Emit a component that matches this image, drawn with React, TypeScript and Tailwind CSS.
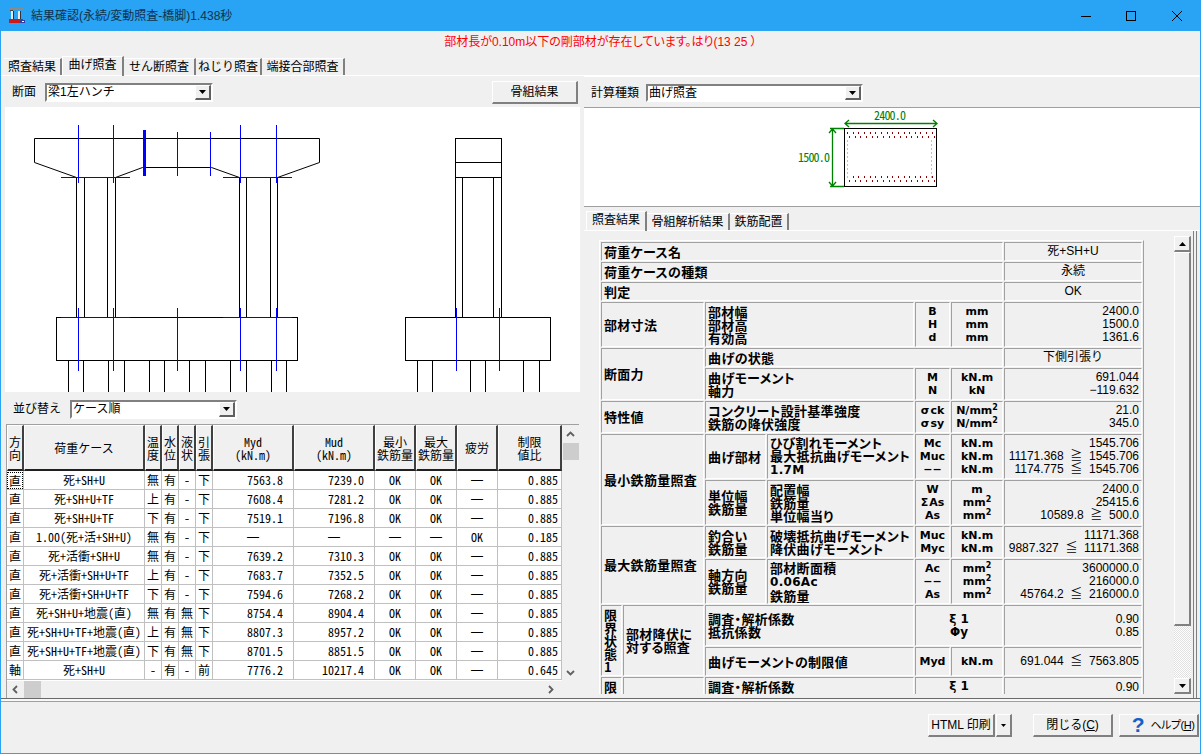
import type { ReactNode } from 'react';

const gridRows = [
  ['直', '死+SH+U', '無', '有', '－', '下', '7563.8', '7239.0', 'OK', 'OK', '―', '0.885'],
  ['直', '死+SH+U+TF', '上', '有', '－', '下', '7608.4', '7281.2', 'OK', 'OK', '―', '0.885'],
  ['直', '死+SH+U+TF', '下', '有', '－', '下', '7519.1', '7196.8', 'OK', 'OK', '―', '0.885'],
  ['直', '1.00(死+活+SH+U)', '無', '有', '－', '下', '―', '―', '―', '―', 'OK', '0.185'],
  ['直', '死+活衝+SH+U', '無', '有', '－', '下', '7639.2', '7310.3', 'OK', 'OK', '―', '0.885'],
  ['直', '死+活衝+SH+U+TF', '上', '有', '－', '下', '7683.7', '7352.5', 'OK', 'OK', '―', '0.885'],
  ['直', '死+活衝+SH+U+TF', '下', '有', '－', '下', '7594.6', '7268.2', 'OK', 'OK', '―', '0.885'],
  ['直', '死+SH+U+地震(直)', '無', '有', '無', '下', '8754.4', '8904.4', 'OK', 'OK', '―', '0.885'],
  ['直', '死+SH+U+TF+地震(直)', '上', '有', '無', '下', '8807.3', '8957.2', 'OK', 'OK', '―', '0.885'],
  ['直', '死+SH+U+TF+地震(直)', '下', '有', '無', '下', '8701.5', '8851.5', 'OK', 'OK', '―', '0.885'],
  ['軸', '死+SH+U', '－', '有', '－', '前', '7776.2', '10217.4', 'OK', 'OK', '―', '0.645'],
];

const pilesFront = [68.5, 83.5, 108.5, 124.5, 149.5, 164.5, 189.5, 205.5, 230.5, 246.5, 271.5, 286.5];
const pilesSide = [417.5, 432.5, 470.5, 485.5, 523.5, 539.5];

function Tab({ active, width, children }: { active?: boolean; width: string; children: ReactNode }) {
  return (
    <div
      className={
        width +
        (active
          ? ' z-10 -mb-px flex h-[20px] items-center justify-center border-t border-l border-white border-r-2 border-r-[#808080] pb-[3px]'
          : ' flex h-[17px] items-center justify-center border-t border-white border-r-2 border-r-[#808080]')
      }
    >
      {children}
    </div>
  );
}

function Combo({ width, height, children }: { width: string; height: string; children: ReactNode }) {
  return (
    <div
      className={
        width +
        ' ' +
        height +
        ' flex items-stretch border-2 border-t-[#808080] border-l-[#808080] border-r-white border-b-white bg-white'
      }
    >
      <div className="flex-1 self-center overflow-hidden pl-[1px] text-[12px] leading-[14px] whitespace-nowrap">{children}</div>
      <div className="flex w-[16px] items-center justify-center border-t border-l border-white border-r-2 border-b-2 border-r-[#606060] border-b-[#606060] bg-[#f0f0f0]">
        <svg width="7" height="4" viewBox="0 0 7 4">
          <path d="M0 0H7L3.5 4Z" fill="#000" />
        </svg>
      </div>
    </div>
  );
}

function Btn({ width, children }: { width: string; children: ReactNode }) {
  return (
    <div
      className={
        width +
        ' flex h-[23px] items-center justify-center border-t border-l border-white border-r-2 border-b-2 border-r-[#808080] border-b-[#808080] bg-[#f0f0f0]'
      }
    >
      {children}
    </div>
  );
}

function Chev({ d }: { d: string }) {
  return (
    <svg width="9" height="9" viewBox="0 0 9 9">
      <path d={d} fill="none" stroke="#606060" strokeWidth="1.8" />
    </svg>
  );
}

function PierDrawing() {
  return (
    <svg width="575" height="285" viewBox="5 107 575 285" className="block bg-white">
      <g fill="none" stroke="#000" strokeWidth="1">
        <path d="M34.5 138.5H319.5V162.5L277.5 177.5H239.5L211.5 167.5H142.5L115.5 177.5H76.5L34.5 162.5Z" />
        <path shapeRendering="crispEdges" d="M76.5 177V317M84.5 177V317M107.5 177V317M115.5 177V317M239.5 177V317M246.5 177V317M270.5 177V317M277.5 177V317" />
        <rect x="56.5" y="317.5" width="241" height="43" shapeRendering="crispEdges" />
        <path shapeRendering="crispEdges" d="M455.5 138.5H501.5V177.5H455.5ZM455.5 162.5H501.5M455.5 177V317M462.5 177V317M493.5 177V317M501.5 177V317" />
        <rect x="405.5" y="317.5" width="145" height="43" shapeRendering="crispEdges" />
        {pilesFront.concat(pilesSide).map((x) => (
          <path key={x} shapeRendering="crispEdges" d={`M${x} 361V392`} />
        ))}
      </g>
      <g fill="none" stroke="#0000ff" strokeWidth="1" shapeRendering="crispEdges">
        <path d="M61 177.5H130M223 177.5H292M61 317.5H130M223 317.5H292" />
        <path d="M78.5 125V183M113.5 125V183M240.5 125V183M276.5 125V183" />
        <path d="M78.5 308V371M113.5 308V371M240.5 308V371M276.5 308V371M177.5 308V371" />
        <path d="M177.5 132V176M210.5 132V176M456.5 308V371M499.5 308V371" />
        <path d="M144.5 130V176" strokeWidth="3" />
      </g>
    </svg>
  );
}

function SectionDrawing() {
  const xs = Array.from({ length: 16 }, (_, i) => 847 + i * 5.65);
  const sides = Array.from({ length: 10 }, (_, i) => 140 + i * 4);
  return (
    <svg width="616" height="98" viewBox="584 108 616 98" className="block">
      <rect x="844.5" y="128.5" width="92" height="58" fill="#fff" stroke="#000" shapeRendering="crispEdges" />
      <g fill="#8b0000" shapeRendering="crispEdges">
        {xs.map((x) => (
          <g key={x}>
            <rect x={Math.round(x)} y="132" width="1" height="2" />
            <rect x={Math.round(x) + 2} y="136" width="1" height="2" />
            <rect x={Math.round(x)} y="176" width="1" height="2" />
            <rect x={Math.round(x) + 2} y="180" width="1" height="2" />
          </g>
        ))}
      </g>
      <g fill="#c0c0c0" shapeRendering="crispEdges">
        {sides.map((y) => (
          <g key={y}>
            <rect x="847" y={y} width="1" height="2" />
            <rect x="931" y={y} width="1" height="2" />
          </g>
        ))}
      </g>
      <g fill="none" stroke="#008000" strokeWidth="1.3">
        <path d="M845 123.5H937M849 120L845 123.5L849 127M933 120L937 123.5L933 127" />
        <path d="M832.5 129V186M829 133L832.5 129L836 133M829 182L832.5 186L836 182M830 128.5H844M830 186.5H844" />
      </g>
    </svg>
  );
}

function Td({
  children,
  right,
  center,
  colSpan,
  rowSpan,
  bold = true,
}: {
  children: ReactNode;
  right?: boolean;
  center?: boolean;
  colSpan?: number;
  rowSpan?: number;
  bold?: boolean;
}) {
  return (
    <td
      colSpan={colSpan}
      rowSpan={rowSpan}
      className={
        'overflow-hidden border border-t-[#a0a0a0] border-r-white border-b-white border-l-[#a0a0a0] px-[2px] py-0 leading-[13px] whitespace-nowrap ' +
        (right ? 'text-right ' : center ? 'text-center ' : 'text-left ') +
        (bold
          ? "pb-[1px] font-['Noto_Sans_CJK_JP',sans-serif] text-[13px] font-bold tracking-[0.3px] [font-feature-settings:'palt']"
          : "font-['Liberation_Sans','Noto_Sans_CJK_JP',sans-serif] text-[12px] font-normal")
      }
    >
      {children}
    </td>
  );
}

function Sym({ children }: { children: ReactNode }) {
  return (
    <td className="border border-t-[#a0a0a0] border-r-white border-b-white border-l-[#a0a0a0] p-0 text-center font-['DejaVu_Sans','Noto_Sans_CJK_JP',sans-serif] text-[11px] leading-[13px] font-bold whitespace-nowrap">
      {children}
    </td>
  );
}

function Sq() {
  return <sup className="text-[8px] leading-none">2</sup>;
}

function ResultTable() {
  return (
    <table className="w-[545px] table-fixed border-separate border-spacing-px border border-t-white border-r-[#a0a0a0] border-b-[#a0a0a0] border-l-white">
      <colgroup>
        <col className="w-[21px]" />
        <col className="w-[81px]" />
        <col className="w-[61px]" />
        <col className="w-[147px]" />
        <col className="w-[35px]" />
        <col className="w-[52px]" />
        <col className="w-[138px]" />
      </colgroup>
      <tbody>
        <tr className="h-[19px]">
          <Td colSpan={6}>荷重ケース名</Td>
          <Td center bold={false}>死+SH+U</Td>
        </tr>
        <tr className="h-[19px]">
          <Td colSpan={6}>荷重ケースの種類</Td>
          <Td center bold={false}>永続</Td>
        </tr>
        <tr className="h-[19px]">
          <Td colSpan={6}>判定</Td>
          <Td center bold={false}>OK</Td>
        </tr>
        <tr className="h-[45px]">
          <Td colSpan={2}>部材寸法</Td>
          <Td colSpan={2}>部材幅<br />部材高<br />有効高</Td>
          <Sym>B<br />H<br />d</Sym>
          <Sym>mm<br />mm<br />mm</Sym>
          <Td right bold={false}>2400.0<br />1500.0<br />1361.6</Td>
        </tr>
        <tr className="h-[19px]">
          <Td colSpan={2} rowSpan={2}>断面力</Td>
          <Td colSpan={4}>曲げの状態</Td>
          <Td center bold={false}>下側引張り</Td>
        </tr>
        <tr className="h-[32px]">
          <Td colSpan={2}>曲げモーメント<br />軸力</Td>
          <Sym>M<br />N</Sym>
          <Sym>kN.m<br />kN</Sym>
          <Td right bold={false}>691.044<br />−119.632</Td>
        </tr>
        <tr className="h-[32px]">
          <Td colSpan={2}>特性値</Td>
          <Td colSpan={2}>コンクリート設計基準強度<br />鉄筋の降伏強度</Td>
          <Sym>σ&#8202;ck<br />σ&#8202;sy</Sym>
          <Sym>N/mm<Sq /><br />N/mm<Sq /></Sym>
          <Td right bold={false}>21.0<br />345.0</Td>
        </tr>
        <tr className="h-[45px]">
          <Td colSpan={2} rowSpan={2}>最小鉄筋量照査</Td>
          <Td>曲げ部材</Td>
          <Td>ひび割れモーメント<br />最大抵抗曲げモーメント<br /><span className="font-['DejaVu_Sans'] text-[12px]">1.7M</span></Td>
          <Sym>Mc<br />Muc<br />−−</Sym>
          <Sym>kN.m<br />kN.m<br />kN.m</Sym>
          <Td right bold={false}>1545.706<br />11171.368 &nbsp;≧&nbsp; 1545.706<br />1174.775 &nbsp;≦&nbsp; 1545.706</Td>
        </tr>
        <tr className="h-[45px]">
          <Td>単位幅<br />鉄筋量</Td>
          <Td>配置幅<br />鉄筋量<br />単位幅当り</Td>
          <Sym>W<br />Σ&#8202;As<br />As</Sym>
          <Sym>m<br />mm<Sq /><br />mm<Sq /></Sym>
          <Td right bold={false}>2400.0<br />25415.6<br />10589.8 &nbsp;≧&nbsp; 500.0</Td>
        </tr>
        <tr className="h-[32px]">
          <Td colSpan={2} rowSpan={2}>最大鉄筋量照査</Td>
          <Td>釣合い<br />鉄筋量</Td>
          <Td>破壊抵抗曲げモーメント<br />降伏曲げモーメント</Td>
          <Sym>Muc<br />Myc</Sym>
          <Sym>kN.m<br />kN.m</Sym>
          <Td right bold={false}>11171.368<br />9887.327 &nbsp;≦&nbsp; 11171.368</Td>
        </tr>
        <tr className="h-[45px]">
          <Td>軸方向<br />鉄筋量</Td>
          <Td>部材断面積<br /><span className="font-['DejaVu_Sans'] text-[12px]">0.06Ac</span><br />鉄筋量</Td>
          <Sym>Ac<br />−−<br />As</Sym>
          <Sym>mm<Sq /><br />mm<Sq /><br />mm<Sq /></Sym>
          <Td right bold={false}>3600000.0<br />216000.0<br />45764.2 &nbsp;≦&nbsp; 216000.0</Td>
        </tr>
        <tr className="h-[41px]">
          <Td rowSpan={2}>限<br />界<br />状<br />態<br />1</Td>
          <Td rowSpan={2}>部材降伏に<br />対する照査</Td>
          <Td colSpan={2}>調査・解析係数<br />抵抗係数</Td>
          <td colSpan={2} className="border border-t-[#a0a0a0] border-r-white border-b-white border-l-[#a0a0a0] p-0 text-center font-['DejaVu_Sans',sans-serif] text-[12px] leading-[13px] font-bold">ξ 1<br />Φy</td>
          <Td right bold={false}>0.90<br />0.85</Td>
        </tr>
        <tr className="h-[29px]">
          <Td colSpan={2}>曲げモーメントの制限値</Td>
          <Sym>Myd</Sym>
          <Sym>kN.m</Sym>
          <Td right bold={false}>691.044 &nbsp;≦&nbsp; 7563.805</Td>
        </tr>
        <tr className="h-[30px] align-top">
          <Td><div className="pt-[2px]">限</div></Td>
          <Td> </Td>
          <Td colSpan={2}><div className="pt-[2px]">調査・解析係数</div></Td>
          <td colSpan={2} className="border border-t-[#a0a0a0] border-r-white border-b-white border-l-[#a0a0a0] p-0 pt-[2px] text-center font-['DejaVu_Sans',sans-serif] text-[12px] leading-[13px] font-bold">ξ 1</td>
          <Td right bold={false}><div className="pt-[3px]">0.90</div></Td>
        </tr>
      </tbody>
    </table>
  );
}

function CaseGrid() {
  const head = 'border-t border-r-2 border-b-2 border-l border-t-white border-r-[#404040] border-b-[#202020] border-l-white bg-[#f0f0f0] p-0 text-center leading-[13px] font-normal';
  const cell = 'border-r border-b border-[#c0c0c0] p-0 text-center whitespace-nowrap';
  const dash = " font-['Liberation_Sans',sans-serif]";
  return (
    <div className="ml-[5px] flex h-[274px] w-[573px] flex-col border-t border-l border-[#a0a0a0]">
      <div className="flex h-[256px]">
        <div className="h-full w-[555px] overflow-hidden bg-white">
          <table className="w-[555px] table-fixed border-separate border-spacing-0 font-['Noto_Sans_CJK_JP',sans-serif] text-[12px] [font-feature-settings:'hwid']">
            <colgroup>
              <col className="w-[17px]" />
              <col className="w-[121px]" />
              <col className="w-[17px]" />
              <col className="w-[17px]" />
              <col className="w-[17px]" />
              <col className="w-[17px]" />
              <col className="w-[81px]" />
              <col className="w-[81px]" />
              <col className="w-[41px]" />
              <col className="w-[41px]" />
              <col className="w-[41px]" />
              <col className="w-[64px]" />
            </colgroup>
            <thead>
              <tr className="h-[46px]">
                <th className={head}>方<br />向</th>
                <th className={head}>荷重ケース</th>
                <th className={head}>温<br />度</th>
                <th className={head}>水<br />位</th>
                <th className={head}>液<br />状</th>
                <th className={head}>引<br />張</th>
                <th className={head}>Myd<br />(kN.m)</th>
                <th className={head}>Mud<br />(kN.m)</th>
                <th className={head}>最小<br />鉄筋量</th>
                <th className={head}>最大<br />鉄筋量</th>
                <th className={head}>疲労</th>
                <th className={head}>制限<br />値比</th>
              </tr>
            </thead>
            <tbody>
              {gridRows.map((r, i) => (
                <tr key={i} className="h-[19px]">
                  {r.map((v, j) => {
                    if (j === 0 && i === 0) {
                      return (
                        <td key={j} className={cell}>
                          <div className="mx-auto h-[17px] border border-dotted border-black leading-[15px]">{v}</div>
                        </td>
                      );
                    }
                    if ((j === 6 || j === 7) && v !== '―') {
                      return (
                        <td key={j} className={cell + ' !text-right pr-[10px]'}>
                          {v}
                        </td>
                      );
                    }
                    if (j === 11) {
                      return (
                        <td key={j} className={cell + ' !text-right pr-[3px]'}>
                          {v}
                        </td>
                      );
                    }
                    return (
                      <td key={j} className={cell + (v === '―' ? dash : '')}>
                        {v}
                      </td>
                    );
                  })}
                </tr>
              ))}
            </tbody>
          </table>
        </div>
        <div className="flex w-[17px] flex-col items-center bg-[#f0f0f0]">
          <div className="flex h-[18px] items-center justify-center">
            <Chev d="M1 6L4.5 2.5L8 6" />
          </div>
          <div className="h-[17px] w-[16px] bg-[#cdcdcd]" />
          <div className="flex-1" />
          <div className="flex h-[17px] items-center justify-center">
            <Chev d="M1 3L4.5 6.5L8 3" />
          </div>
        </div>
      </div>
      <div className="flex h-[17px] items-center bg-[#f0f0f0]">
        <div className="flex w-[17px] items-center justify-center">
          <Chev d="M6 1L2.5 4.5L6 8" />
        </div>
        <div className="h-[17px] w-[17px] bg-[#cdcdcd]" />
        <div className="flex-1" />
        <div className="mr-[20px] flex w-[17px] items-center justify-center">
          <Chev d="M3 1L6.5 4.5L3 8" />
        </div>
      </div>
    </div>
  );
}

function ScrollBtn({ d }: { d: string }) {
  return (
    <div className="flex h-[16px] items-center justify-center border-t border-r-2 border-b-2 border-l border-t-white border-r-[#808080] border-b-[#808080] border-l-white bg-[#f0f0f0]">
      <svg width="7" height="4" viewBox="0 0 7 4">
        <path d={d} fill="#000" />
      </svg>
    </div>
  );
}

export default function App() {
  return (
    <div className="flex h-[754px] w-[1201px] flex-col overflow-hidden border-x border-b border-[#29a3f3] bg-[#f0f0f0] font-['Liberation_Sans','Noto_Sans_CJK_JP',sans-serif] text-[12px] text-black">
      {/* Title bar */}
      <div className="-mx-px flex h-[31px] shrink-0 items-center bg-[#29a3f3] pl-[9px]">
        <svg width="16" height="16" viewBox="0 0 16 16">
          <rect x="0" y="0" width="15" height="2" fill="#8a8a8a" />
          <rect x="1" y="2" width="3" height="1" fill="#444" />
          <rect x="2" y="3" width="2" height="8" fill="#e8e8e8" />
          <rect x="4" y="3" width="1" height="8" fill="#333" />
          <rect x="9" y="3" width="2" height="8" fill="#e8e8e8" />
          <rect x="11" y="3" width="1" height="8" fill="#333" />
          <rect x="0" y="11" width="14" height="4" fill="#d01818" />
          <rect x="11" y="12" width="5" height="3" fill="#3040a0" />
          <rect x="13" y="13" width="2" height="1" fill="#fff" />
        </svg>
        <span className="ml-[6px] text-[#10324f]">結果確認(永続/変動照査-橋脚)1.438秒</span>
        <div className="ml-auto flex h-full items-center">
          <div className="flex h-full w-[45px] items-center justify-center">
            <svg width="10" height="10" viewBox="0 0 10 10"><path d="M0 5.5H10" stroke="#000" /></svg>
          </div>
          <div className="flex h-full w-[46px] items-center justify-center">
            <svg width="10" height="10" viewBox="0 0 10 10"><rect x="0.5" y="0.5" width="9" height="9" fill="none" stroke="#000" /></svg>
          </div>
          <div className="flex h-full w-[46px] items-center justify-center">
            <svg width="10" height="10" viewBox="0 0 10 10"><path d="M0 0L10 10M10 0L0 10" stroke="#000" /></svg>
          </div>
          <div className="w-[1px]" />
        </div>
      </div>

      {/* Message */}
      <div className="flex h-[23px] shrink-0 items-center justify-center pb-[1px] text-[#ff0000] [font-feature-settings:'palt']">
        部材長が0.10m以下の剛部材が存在しています。はり(13 25 ）
      </div>

      {/* Main tabs */}
      <div className="flex h-[22px] shrink-0 items-end border-b border-white pl-[3px]">
        <Tab width="w-[58px]">照査結果</Tab>
        <Tab active width="w-[62px]">曲げ照査</Tab>
        <Tab width="w-[72px]">せん断照査</Tab>
        <Tab width="w-[66px]">ねじり照査</Tab>
        <Tab width="w-[83px]">端接合部照査</Tab>
      </div>

      <div className="flex h-[622px] shrink-0">
        {/* Left pane */}
        <div className="w-[580px] shrink-0">
          <div className="flex h-[31px] items-center pt-[1px] pl-[11px]">
            <span className="w-[33px]">断面</span>
            <Combo width="w-[168px]" height="h-[19px]">梁1左ハンチ</Combo>
            <div className="mr-[3px] ml-auto">
              <Btn width="w-[86px]">骨組結果</Btn>
            </div>
          </div>
          <div className="ml-[4px] h-[285px]">
            <PierDrawing />
          </div>
          <div className="flex h-[32px] items-center pt-[2px] pl-[12px]">
            <span className="w-[57px]">並び替え</span>
            <Combo width="w-[167px]" height="h-[19px]">ケース順</Combo>
          </div>
          <CaseGrid />
        </div>

        {/* Right pane */}
        <div className="ml-[3px] w-[616px] shrink-0">
          <div className="flex h-[32px] items-center border-t border-b border-t-white border-b-[#a0a0a0] pt-[2px] pl-[7px]">
            <span className="w-[55px]">計算種類</span>
            <Combo width="w-[217px]" height="h-[18px]">曲げ照査</Combo>
          </div>
          <div className="relative h-[99px] border-b border-[#a0a0a0] bg-white">
            <SectionDrawing />
            <span className="absolute top-[0px] left-[290px] font-['Noto_Sans_CJK_JP',sans-serif] text-[12px] leading-[13px] tracking-[-0.8px] text-[#008000] [font-feature-settings:'hwid']">2400.0</span>
            <span className="absolute top-[42px] left-[214px] font-['Noto_Sans_CJK_JP',sans-serif] text-[12px] leading-[13px] tracking-[-0.8px] text-[#008000] [font-feature-settings:'hwid']">1500.0</span>
          </div>
          <div className="flex h-[24px] items-end border-b border-white pl-[2px]">
            <Tab active width="w-[61px]">照査結果</Tab>
            <Tab width="w-[83px]">骨組解析結果</Tab>
            <Tab width="w-[59px]">鉄筋配置</Tab>
          </div>
          <div className="flex h-[467px] pt-[5px] pb-[4px]">
            <div className="w-[590px] overflow-hidden pt-[4px] pl-[15px]">
              <ResultTable />
            </div>
            <div className="flex w-[17px] flex-col">
              <ScrollBtn d="M3.5 0L7 4H0Z" />
              <div className="h-[374px] border-t border-r-2 border-b-2 border-l border-t-white border-r-[#808080] border-b-[#808080] border-l-white bg-[#f0f0f0]" />
              <div className="flex-1 bg-[repeating-conic-gradient(#ffffff_0_25%,#e0e0e0_0_50%)] bg-[length:2px_2px]" />
              <ScrollBtn d="M0 0H7L3.5 4Z" />
            </div>
            <div className="-mt-[5px] -mb-[4px] ml-[2px] w-[4px] border-x border-[#808080]" />
          </div>
        </div>
      </div>

      {/* Footer */}
      <div className="h-[4px] shrink-0 border-t border-b border-t-[#696969] border-b-[#a0a0a0] bg-[#f8f8f8]" />
      <div className="flex h-[51px] shrink-0 justify-end pt-[12px] pr-[1px]">
        <Btn width="w-[67px]">HTML 印刷</Btn>
        <div className="ml-[1px]">
          <Btn width="w-[16px]">
            <svg width="5" height="3" viewBox="0 0 5 3"><path d="M0 0H5L2.5 3Z" fill="#000" /></svg>
          </Btn>
        </div>
        <div className="ml-[21px]">
          <Btn width="w-[80px]">
            <span>閉じる(<span className="underline">C</span>)</span>
          </Btn>
        </div>
        <div className="ml-[6px]">
          <Btn width="w-[80px]">
            <span className="mr-[6px] ml-[9px] text-[21px] leading-[20px] font-bold text-[#1560c8]">?</span>
            <span className="text-[11px] tracking-[-0.5px] [font-feature-settings:'palt']">ヘルプ(<span className="underline">H</span>)</span>
          </Btn>
        </div>
      </div>
    </div>
  );
}
